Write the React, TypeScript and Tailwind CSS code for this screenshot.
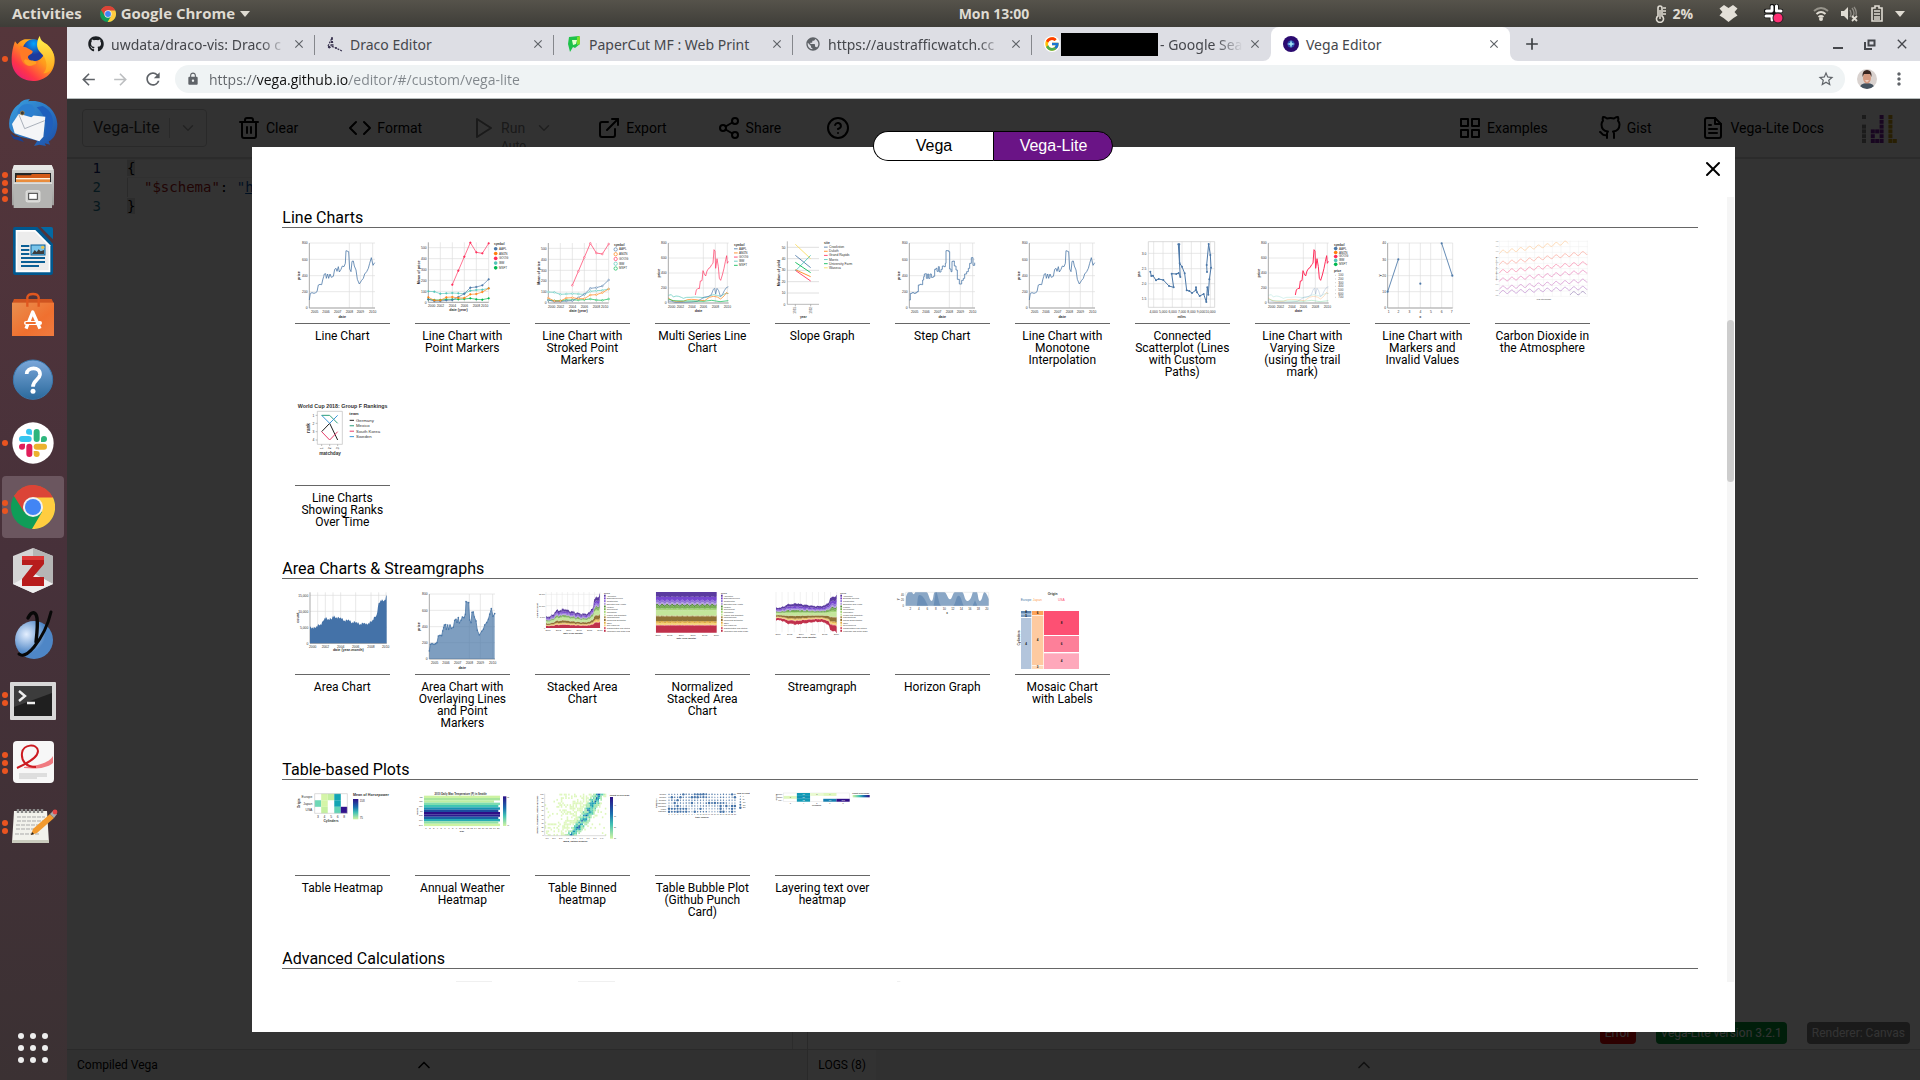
import React from 'react';
import type { ReactNode } from 'react';
import {
  FiTrash2, FiCode, FiPlay, FiExternalLink, FiShare2, FiHelpCircle, FiGrid, FiGithub,
  FiFileText, FiChevronDown, FiChevronUp, FiX,
} from 'react-icons/fi';
import { FaGithub } from 'react-icons/fa';
import {
  MdArrowBack, MdArrowForward, MdRefresh, MdLock, MdStarBorder, MdMoreVert, MdAdd, MdClose, MdPublic,
} from 'react-icons/md';
import { FcGoogle } from 'react-icons/fc';

const BLUE = '#4c78a8';
const ORANGE = '#ff7f0e';
const PINK = '#ff2e5b';
const TEAL = '#54c5b8';
const GREEN = '#00b84f';

type Pt = [number, number];
const line = (pts: Pt[]) => pts.map((p) => p.join(',')).join(' ');

/* ---------- thumbnail building blocks ---------- */

function Thumb({ x = 0, y = 0, children }: { x?: number; y?: number; children: ReactNode }) {
  return (
    <svg className="h-20 w-full" viewBox={`${x} ${y} 285 240`} preserveAspectRatio="xMinYMin meet" aria-hidden="true">
      {children}
    </svg>
  );
}

function T({ x, y, s = 10, c = '#333', a = 'middle', b = false, r = 0, children }: {
  x: number; y: number; s?: number; c?: string; a?: 'start' | 'middle' | 'end'; b?: boolean; r?: number; children: ReactNode;
}) {
  return (
    <text
      x={x} y={y} fontSize={s} fill={c} textAnchor={a} fontWeight={b ? 700 : 400}
      fontFamily='"Liberation Sans", sans-serif' transform={r ? `rotate(${r} ${x} ${y})` : undefined}
    >
      {children}
    </text>
  );
}

function Axes({ x0, x1, y0, y1, xs, ys, xl, yl, xlY, title, titleY, yTitle, yTitleX }: {
  x0: number; x1: number; y0: number; y1: number; xs: number[]; ys: number[]; xl: [number, string][]; yl: string[];
  xlY: number; title: string; titleY: number; yTitle: string; yTitleX: number;
}) {
  return (
    <g>
      <g stroke="#dcdcdc" strokeWidth="2">
        {xs.map((v) => <line key={v} x1={v} x2={v} y1={y0} y2={y1} />)}
        {ys.map((v) => <line key={v} x1={x0} x2={x1} y1={v} y2={v} />)}
      </g>
      <path d={`M${x0} ${y0}V${y1}H${x1}`} stroke="#999" strokeWidth="2.5" fill="none" />
      {ys.map((v, i) => <T key={v} x={x0 - 5} y={v + 4} a="end">{yl[i]}</T>)}
      {xl.map(([v, t]) => <T key={v} x={v} y={xlY}>{t}</T>)}
      <T x={(x0 + x1) / 2} y={titleY} b s={11}>{title}</T>
      <T x={yTitleX} y={(y0 + y1) / 2} b s={11} r={-90}>{yTitle}</T>
    </g>
  );
}

function Legend({ x, y, step, title, items, mark = 'line', s = 9 }: {
  x: number; y: number; step: number; title: string; items: [string, string][]; mark?: 'line' | 'dot' | 'ring' | 'box'; s?: number;
}) {
  return (
    <g>
      <T x={x} y={y + 3} a="start" b s={s}>{title}</T>
      {items.map(([label, color], i) => {
        const cy = y + step * (i + 1);
        return (
          <g key={label + i}>
            {mark === 'line' && <line x1={x} x2={x + 11} y1={cy} y2={cy} stroke={color} strokeWidth="2.5" />}
            {mark === 'dot' && <circle cx={x + 5} cy={cy} r="5.5" fill={color} />}
            {mark === 'ring' && <circle cx={x + 5} cy={cy} r="5" fill="none" stroke={color} strokeWidth="2" />}
            {mark === 'box' && <rect x={x} y={cy - 3} width="5" height="6" fill={color} />}
            <T x={x + (mark === 'box' ? 8 : 15)} y={cy + 3} a="start" s={s}>{label}</T>
          </g>
        );
      })}
    </g>
  );
}

const STOCKS: [string, string][] = [['AAPL', BLUE], ['AMZN', ORANGE], ['GOOG', PINK], ['IBM', TEAL], ['MSFT', GREEN]];

/* ---------- line charts ---------- */

const PRICE: Pt[] = [
  [118, 300], [121, 280], [126, 278], [132, 280], [137, 278], [141, 275], [145, 255], [150, 253], [155, 254], [158, 240],
  [161, 230], [163, 222], [167, 221], [169, 235], [173, 222], [176, 235], [180, 222], [184, 232], [190, 229], [194, 208],
  [198, 205], [201, 214], [205, 200], [208, 216], [213, 208], [217, 198], [222, 200], [226, 190], [228, 152], [236, 155],
  [239, 207], [243, 215], [246, 184], [250, 183], [253, 198], [258, 210], [262, 238], [268, 252], [275, 241], [280, 235],
  [284, 222], [290, 215], [295, 205], [299, 190], [304, 173], [309, 196], [314, 188],
];

function PriceChart({ kind = 'line' }: { kind?: 'line' | 'step' | 'area' }) {
  const pts: Pt[] = kind === 'step' ? PRICE.flatMap((p, i) => (i ? ([[p[0], PRICE[i - 1][1]], p] as Pt[]) : [p])) : PRICE;
  return (
    <Thumb x={75} y={120}>
      <Axes
        x0={118} x1={315} y0={129} y1={324} xs={[238, 271, 308]} ys={[129, 178, 227, 275, 324]}
        xl={[[134, '2005'], [168, '2006'], [203, '2007'], [238, '2008'], [271, '2009'], [308, '2010']]}
        yl={['800', '600', '400', '200', '0']} xlY={339} title="date" titleY={353} yTitle="price" yTitleX={90}
      />
      {kind === 'area' && <polygon points={`118,324 ${line(pts)} 314,324`} fill={BLUE} fillOpacity="0.72" />}
      <polyline points={line(pts)} fill="none" stroke={BLUE} strokeWidth="2.4" strokeLinejoin="round" />
      {kind === 'area' && PRICE.map(([x, y]) => <circle key={x} cx={x} cy={y} r="2.4" fill={BLUE} />)}
    </Thumb>
  );
}

const YEARLY: { c: string; p: Pt[] }[] = [
  { c: TEAL, p: [[475, 274], [493, 275], [511, 281], [529, 280], [547, 279], [565, 280], [583, 281], [601, 272], [619, 270], [637, 269], [656, 265]] },
  { c: GREEN, p: [[475, 298], [493, 300], [511, 300], [529, 298], [547, 298], [565, 298], [583, 297], [601, 295], [619, 298], [637, 299], [656, 295]] },
  { c: BLUE, p: [[475, 298], [493, 303], [511, 303], [529, 301], [547, 300], [565, 291], [583, 281], [601, 263], [619, 261], [637, 256], [656, 238]] },
  { c: ORANGE, p: [[475, 292], [493, 301], [511, 301], [529, 292], [547, 291], [565, 294], [583, 294], [601, 283], [619, 282], [637, 276], [656, 265]] },
  { c: PINK, p: [[547, 254], [565, 212], [583, 170], [601, 128], [619, 157], [637, 160], [656, 130]] },
];

function YearlyChart({ stroked = false }: { stroked?: boolean }) {
  return (
    <Thumb x={435} y={stroked ? 118 : 120}>
      <Axes
        x0={475} x1={656} y0={127} y1={307} xs={[511, 547, 583, 619, 656]} ys={[143, 176, 209, 241, 274, 307]}
        xl={[[485, '2000'], [511, '2002'], [547, '2004'], [583, '2006'], [619, '2008'], [644, '2010']]}
        yl={['500', '400', '300', '200', '100', '0']} xlY={321} title="date (year)" titleY={334} yTitle="Mean of price" yTitleX={449}
      />
      {YEARLY.map(({ c, p }) => (
        <g key={c}>
          <polyline points={line(p)} fill="none" stroke={c} strokeWidth="2" />
          {p.map(([x, y]) => (
            <circle key={x} cx={x} cy={y} r="2.5" fill={stroked ? '#fff' : c} stroke={c} strokeWidth="1.5" />
          ))}
        </g>
      ))}
      <Legend x={672} y={132} step={14.3} title="symbol" items={STOCKS} mark={stroked ? 'ring' : 'dot'} />
    </Thumb>
  );
}

const MULTI: { c: string; p: Pt[] }[] = [
  { c: TEAL, p: [[1195, 286], [1204, 284], [1210, 291], [1218, 288], [1226, 289], [1234, 292], [1240, 295], [1250, 292], [1262, 292], [1275, 291], [1290, 292], [1305, 293], [1318, 289], [1330, 284], [1342, 286], [1352, 290], [1362, 282], [1375, 280]] },
  { c: ORANGE, p: [[1195, 294], [1205, 301], [1220, 305], [1240, 304], [1252, 299], [1264, 298], [1278, 299], [1290, 301], [1304, 302], [1318, 292], [1330, 289], [1342, 291], [1352, 297], [1362, 288], [1370, 277], [1375, 282]] },
  { c: BLUE, p: [[1195, 303], [1205, 304], [1215, 307], [1240, 307], [1265, 306], [1282, 304], [1292, 298], [1304, 291], [1314, 290], [1324, 284], [1330, 268], [1334, 265], [1337, 282], [1341, 265], [1346, 272], [1351, 289], [1357, 284], [1363, 272], [1369, 263], [1375, 260]] },
  { c: GREEN, p: [[1195, 297], [1210, 302], [1240, 303], [1270, 303], [1300, 304], [1325, 301], [1350, 305], [1375, 302]] },
  { c: PINK, p: [[1276, 285], [1279, 270], [1284, 265], [1288, 266], [1291, 243], [1296, 242], [1299, 212], [1303, 222], [1307, 228], [1311, 213], [1316, 205], [1320, 203], [1325, 194], [1329, 190], [1332, 149], [1335, 153], [1337, 205], [1341, 176], [1345, 200], [1348, 235], [1352, 241], [1357, 225], [1362, 205], [1366, 185], [1370, 167], [1372, 190], [1375, 184]] },
];

function MultiChart({ trail = false }: { trail?: boolean }) {
  return (
    <Thumb x={1155} y={120}>
      <Axes
        x0={1195} x1={1376} y0={129} y1={309} xs={[1300, 1336, 1372]} ys={[129, 174, 219, 264, 309]}
        xl={[[1205, '2000'], [1231, '2002'], [1266, '2004'], [1300, '2006'], [1336, '2008'], [1372, '2010']]}
        yl={['800', '600', '400', '200', '0']} xlY={323} title="date" titleY={336} yTitle="price" yTitleX={1170}
      />
      {MULTI.map(({ c, p }) => (
        <polyline
          key={c} points={line(p)} fill="none" stroke={c} strokeLinejoin="round"
          strokeWidth={trail ? (c === PINK ? 3 : 1.2) : 2} strokeOpacity={trail && c !== PINK ? 0.6 : 1}
        />
      ))}
      <Legend x={1392} y={134} step={trail ? 11.8 : 12.4} title="symbol" items={STOCKS} mark={trail ? 'dot' : 'line'} s={9} />
      {trail && (
        <g>
          <T x={1392} y={215} a="start" b s={9}>price</T>
          {['100', '200', '300', '400', '500', '600', '700'].map((t, i) => (
            <g key={t}>
              <line x1={1395} x2={1398} y1={226 + i * 11} y2={226 + i * 11} stroke="#777" />
              <T x={1405} y={229 + i * 11} a="start" s={9}>{t}</T>
            </g>
          ))}
        </g>
      )}
    </Thumb>
  );
}

function SlopeGraph() {
  const rows: [string, string, number, number][] = [
    ['Crookston', BLUE, 166, 203], ['Duluth', ORANGE, 209, 230], ['Grand Rapids', PINK, 211, 243],
    ['Morris', TEAL, 213, 166], ['University Farm', GREEN, 187, 218], ['Waseca', '#fbdc5c', 133, 176],
  ];
  return (
    <Thumb x={45} y={120}>
      <g stroke="#d0d0d0" strokeWidth="2">
        {[142, 176, 211, 245, 279].map((y) => <line key={y} x1="82" x2="177" y1={y} y2={y} />)}
      </g>
      <path d="M82 124V313H177M106 313v6M152 313v6" stroke="#999" strokeWidth="2" fill="none" />
      {['50', '40', '30', '20', '10', '0'].map((t, i) => <T key={t} x={76} y={146 + i * 34.2} a="end">{t}</T>)}
      {rows.map(([n, c, a, b]) => <line key={n} x1="106" x2="152" y1={a} y2={b} stroke={c} strokeWidth="2.6" />)}
      <T x={109} y={331} r={-90} s={9}>1931</T>
      <T x={155} y={331} r={-90} s={9}>1932</T>
      <T x={130} y={353} b>year</T>
      <T x={59} y={219} b s={11} r={-90}>Median of yield</T>
      <Legend x={192} y={129} step={12.4} title="site" items={rows.map((r) => [r[0], r[1]] as [string, string])} s={10} />
    </Thumb>
  );
}

const DRIVE: Pt[] = [
  [1171, 215], [1174, 228], [1179, 227], [1188, 241], [1196, 237], [1210, 240], [1227, 258], [1241, 262], [1235, 221],
  [1249, 222], [1256, 219], [1261, 231], [1255, 133], [1258, 133], [1259, 190], [1266, 200], [1274, 220], [1280, 271],
  [1288, 273], [1296, 279], [1307, 271], [1308, 262], [1311, 277], [1319, 288], [1331, 282], [1339, 306], [1342, 262],
  [1345, 284], [1348, 238], [1353, 203], [1351, 165], [1346, 132], [1340, 195], [1341, 216],
];

function ConnectedScatter() {
  return (
    <Thumb x={1125} y={120}>
      <g stroke="#dcdcdc" strokeWidth="2">
        {[1181, 1209, 1237, 1266, 1294, 1322, 1351].map((x) => <line key={x} x1={x} x2={x} y1="125" y2="322" />)}
        {[160, 206, 251, 297].map((y) => <line key={y} x1="1165" x2="1364" y1={y} y2={y} />)}
      </g>
      <path d="M1165 125V322H1364V125Z" stroke="#c8c8c8" strokeWidth="2" fill="none" />
      {['3.0', '2.5', '2.0', '1.5'].map((t, i) => <T key={t} x={1159} y={164 + i * 45.6} a="end">{t}</T>)}
      {['4,000', '5,000', '6,000', '7,000', '8,000', '9,000', '10,000'].map((t, i) => <T key={t} x={1181 + i * 28.4} y={339} s={10}>{t}</T>)}
      <T x={1265} y={353} b>miles</T>
      <T x={1140} y={223} b r={-90}>gas</T>
      <polyline points={line(DRIVE)} fill="none" stroke={BLUE} strokeWidth="3" strokeLinejoin="round" />
      {DRIVE.map(([x, y]) => <circle key={`${x}-${y}`} cx={x} cy={y} r="3" fill={BLUE} />)}
    </Thumb>
  );
}

function InvalidChart() {
  const dots: Pt[] = [[443, 275], [475, 178], [541, 251], [605, 130], [637, 227]];
  return (
    <Thumb x={405} y={120}>
      <Axes
        x0={443} x1={638} y0={129} y1={324} xs={[475, 508, 541, 572, 605, 638]} ys={[129, 178, 227, 275, 324]}
        xl={[[446, '1'], [475, '2'], [508, '3'], [541, '4'], [573, '5'], [605, '6'], [635, '7']]}
        yl={['40', '30', '20', '10', '0']} xlY={339} title="x" titleY={353} yTitle="y" yTitleX={422}
      />
      <path d="M443 275L475 178M605 130L637 227" stroke={BLUE} strokeWidth="2.6" />
      {dots.map(([x, y]) => <circle key={x} cx={x} cy={y} r="3.2" fill={BLUE} />)}
    </Thumb>
  );
}

function CarbonDioxide() {
  const decades: [number, number, number, number, string][] = [
    [778, 985, 157, 127, '#fdc894'], [778, 1044, 190, 158, '#fba093'], [778, 1044, 215, 189, '#f77fa4'],
    [778, 1044, 240, 214, '#e67bb8'], [778, 1044, 264, 241, '#cf83c8'], [778, 1044, 277, 263, '#bb84cc'], [990, 1040, 280, 279, '#9c86b8'],
  ];
  return (
    <Thumb x={765} y={120}>
      <g stroke="#eee" strokeWidth="1.5">
        {[124, 140, 157, 173, 190, 206, 223, 239, 256, 273, 289].map((y) => <line key={y} x1="778" x2="1044" y1={y} y2={y} />)}
        {[778, 805, 832, 858, 884, 911, 937, 963, 990, 1016, 1042].map((x) => <line key={x} x1={x} x2={x} y1="122" y2="289" />)}
      </g>
      {decades.map(([a, b, y0, y1, c]) => {
        const pts: Pt[] = [];
        for (let x = a; x <= b; x += 3) {
          pts.push([x, Math.round((y0 + ((y1 - y0) * (x - a)) / (b - a) - 5 * Math.sin(((x - 782) / 26.6) * 2 * Math.PI)) * 10) / 10]);
        }
        return <polyline key={y0} points={line(pts)} fill="none" stroke={c} strokeWidth="2" />;
      })}
      {[126, 142, 157, 173, 190, 206, 223, 239, 256, 273, 289].map((y, i) => <T key={y} x={775} y={y} a="end" s={5} c="#888">{420 - i * 10}</T>)}
      <T x={771} y={206} r={-90} s={6}>CO2 concentration in ppm</T>
      <T x={911} y={299} s={6}>Year into decade</T>
    </Thumb>
  );
}

function RankChart() {
  const teams: [string, string, Pt[]][] = [
    ['Germany', '#222', [[155, 695], [179, 670], [203, 720]]], ['Mexico', '#2a9d7a', [[155, 646], [179, 646], [203, 670]]],
    ['South Korea', '#e83e6b', [[155, 695], [179, 720], [203, 695]]], ['Sweden', '#3b96d8', [[155, 646], [179, 670], [203, 646]]],
  ];
  return (
    <Thumb x={75} y={606}>
      <T x={218} y={624} b s={16}>World Cup 2018: Group F Rankings</T>
      <path d="M142 634H217V733H142Z" stroke="#bbb" strokeWidth="2" fill="none" />
      <path d="M137 646h5M137 670h5M137 695h5M137 720h5M155 733v5M179 733v5M203 733v5" stroke="#999" strokeWidth="2" />
      {['1', '2', '3', '4'].map((t, i) => <T key={t} x={130} y={650 + i * 24.8}>{t}</T>)}
      {['1', '2', '3'].map((t, i) => <T key={t} x={158 + i * 24.5} y={745} r={-90}>{t}</T>)}
      {teams.map(([n, c, p]) => <polyline key={n} points={line(p)} fill="none" stroke={c} strokeWidth="3" />)}
      <T x={180} y={765} b s={14}>matchday</T>
      <T x={120} y={684} b s={14} r={-90}>rank</T>
      <T x={238} y={644} b s={12} a="start">team</T>
      {teams.map(([n, c], i) => (
        <g key={n}>
          <line x1="239" x2="252" y1={661 + i * 16.3} y2={661 + i * 16.3} stroke={c} strokeWidth="3" />
          <T x={258} y={665 + i * 16.3} a="start" s={13}>{n}</T>
        </g>
      ))}
    </Thumb>
  );
}

/* ---------- area charts ---------- */

const TOTAL: Pt[] = [
  [0, 48], [13, 46], [25, 55], [35, 58], [40, 70], [46, 77], [55, 72], [65, 74], [69, 82], [80, 77], [92, 77], [105, 67], [115, 72],
  [125, 62], [137, 65], [150, 57], [162, 62], [170, 57], [180, 63], [188, 70], [195, 80], [200, 85], [206, 120], [213, 130],
  [220, 128], [225, 130], [230, 144],
];

function totalAt(x: number): number {
  const i = Math.max(1, TOTAL.findIndex((p) => p[0] >= x));
  const [a, b] = [TOTAL[i - 1], TOTAL[i]];
  return a[1] + ((b[1] - a[1]) * (x - a[0])) / (b[0] - a[0]) + [3, 1, -2, -2, 1, -3][Math.round(x / 2) % 6];
}
const XS = Array.from({ length: 116 }, (_, i) => i * 2);

const LAYERS: [string, number][] = [
  ['#c0304b', 0.17], ['#d9576a', 0.02], ['#f3d37a', 0.05], ['#e0aa3e', 0.04], ['#8f7135', 0.12], ['#a98d4d', 0.02],
  ['#c3e69b', 0.13], ['#a5d678', 0.04], ['#79b152', 0.06], ['#558b3c', 0.04], ['#b39ddb', 0.04], ['#9175d8', 0.06],
  ['#7647cf', 0.09], ['#5a3a9f', 0.12],
];
const INDUSTRIES = [
  'Agriculture', 'Business services', 'Construction', 'Education and Health', 'Finance', 'Government', 'Information',
  'Leisure and hospitality', 'Manufacturing', 'Mining and Extraction', 'Other', 'Self-employed', 'Transportation and Utilities',
  'Wholesale and Retail Trade',
];

function AreaChart() {
  return (
    <Thumb x={75} y={153}>
      <Axes
        x0={120} x1={350} y0={157} y1={310} xs={[143, 166, 189, 212, 257, 303, 326, 348]} ys={[166, 214, 262, 310]}
        xl={[[128, '2000'], [166, '2002'], [212, '2004'], [257, '2006'], [303, '2008'], [347, '2010']]}
        yl={['15,000', '10,000', '5,000', '0']} xlY={323} title="date (year-month)" titleY={334} yTitle="count" yTitleX={88}
      />
      <polygon points={`120,310 ${line(XS.map((x) => [120 + x, 310 - totalAt(x)] as Pt))} 350,310`} fill="#4472a8" />
    </Thumb>
  );
}

function StackChart({ kind }: { kind: 'stack' | 'normal' | 'stream' }) {
  const cfg = {
    stack: { x: 828, w: 162, top: 156, base: 264, lx: 1002 },
    normal: { x: 828, w: 182, top: 156, base: 278, lx: 1023 },
    stream: { x: 800, w: 182, top: 156, base: 277, lx: 993 },
  }[kind];
  const ox = kind === 'stack' ? 795 : kind === 'normal' ? 825 : 797;
  const edge = (x: number, f: number): number => {
    const inner = f > 0.02 && f < 0.98;
    const season = f > 0.64 && f < 0.82 ? 0.02 : 0.005;
    const wob = inner ? Math.sin((x / 19) * 2 * Math.PI) * season + ((x / 2) % 5 < 1 ? 0.006 : 0) : 0;
    if (kind === 'normal') return cfg.base - (f + wob) * 122;
    if (kind === 'stack') return cfg.base - (f + wob) * totalAt(x) * 0.72;
    return 222 + (0.5 - f - wob) * totalAt(x) * 0.8;
  };
  const px = (x: number) => cfg.x + (x * cfg.w) / 230;
  let acc = 0;
  const bands = LAYERS.map(([c, f]) => {
    const lo = acc;
    acc += f;
    const hi = Math.min(1, acc);
    const pts: Pt[] = [...XS.map((x) => [px(x), edge(x, hi)] as Pt), ...[...XS].reverse().map((x) => [px(x), edge(x, lo)] as Pt)];
    return <polygon key={c} fill={c} points={pts.map(([a, b]) => `${a.toFixed(1)},${b.toFixed(1)}`).join(' ')} />;
  });
  return (
    <Thumb x={ox} y={153}>
      <g stroke="#e2e2e2" strokeWidth="1.5">
        {[0, 0.1, 0.2, 0.3, 0.4, 0.5, 0.6, 0.7, 0.8, 0.9, 1].map((f) => (
          <line key={f} x1={cfg.x + cfg.w * f} x2={cfg.x + cfg.w * f} y1={cfg.top} y2={cfg.base} />
        ))}
        {kind === 'stack' && [163, 197, 231].map((y) => <line key={y} x1={cfg.x} x2={cfg.x + cfg.w} y1={y} y2={y} />)}
      </g>
      {bands}
      {kind === 'stack' && ['15,000', '10,000', '5,000', '0'].map((t, i) => <T key={t} x={825} y={166 + i * 34} a="end" s={6}>{t}</T>)}
      {kind === 'stack' && <T x={803} y={211} r={-90} b s={7}>sum of count</T>}
      {['2000', '2002', '2004', '2006', '2008', '2010'].map((t, i) => <T key={t} x={cfg.x + 6 + i * (cfg.w / 5.2)} y={cfg.base + 9} s={7}>{t}</T>)}
      <T x={cfg.x + cfg.w / 2} y={cfg.base + 18} b s={7}>date (year-month)</T>
      <Legend
        x={cfg.lx} y={159} step={8.1} title="series" mark="box" s={6}
        items={INDUSTRIES.map((n, i) => [n, LAYERS[LAYERS.length - 1 - i][0]] as [string, string])}
      />
    </Thumb>
  );
}

function HorizonGraph() {
  return (
    <Thumb x={405} y={153}>
      <path d="M437 157H686V197H437Z" stroke="#ddd" strokeWidth="1.5" fill="none" />
      <path
        fill="#4c78a8" fillOpacity="0.65"
        d="M437 197L438 170Q442 157 447 157H456Q461 168 466 157H499C506 157 508 183 515 183C521 183 519 157 525 157H553C560 157 563 178 570 178C577 178 578 157 585 157H606C613 157 613 183 622 183C632 183 636 166 638 157H651C655 166 654 183 660 183C667 183 668 157 674 157C680 159 684 172 686 177V197Z"
      />
      <path fill="#4c78a8" fillOpacity="0.5" d="M470 197C474 190 471 165 479 165C487 165 495 178 501 192L504 197ZM521 197L527 157H530L539 192L543 197ZM580 197C588 190 588 167 596 167C603 167 606 188 611 197ZM638 197L645 181L652 197Z" />
      {['40', '20', '0'].map((t, i) => <T key={t} x={432} y={168 + i * 16.3} a="end" s={8}>{t}</T>)}
      {[2, 4, 6, 8, 10, 12, 14, 16, 18, 20].map((t, i) => <T key={t} x={451 + i * 25.5} y={211} s={9}>{t}</T>)}
      <T x={418} y={178} b r={-90} s={9}>y</T>
      <T x={561} y={222} b s={9}>x</T>
    </Thumb>
  );
}

function MosaicChart() {
  const cells: [number, number, number, number, string, string][] = [
    [783, 213, 31, 8, '#5d85b1', '8'], [783, 223, 31, 8, '#7b9dc3', '5'], [783, 234, 31, 153, '#b3c5dc', '4'],
    [816, 213, 34, 12, '#fda45c', '6'], [816, 227, 34, 148, '#fecaa0', '4'], [816, 377, 34, 10, '#fed9b8', '3'],
    [852, 213, 105, 72, '#fd5073', '8'], [852, 288, 105, 48, '#fd7f99', '6'], [852, 340, 105, 47, '#fea8bb', '4'],
  ];
  return (
    <Thumb x={765} y={153}>
      <T x={878} y={166} b s={10}>Origin</T>
      <T x={798} y={184} c="#4c78a8" s={10}>Europe</T>
      <T x={832} y={184} c="#fda45c" s={10}>Japan</T>
      <T x={904} y={184} c="#fd5073" s={10}>USA</T>
      <T x={779} y={294} b r={-90} s={10}>Cylinders</T>
      {cells.map(([x, y, w, h, c, t]) => (
        <g key={`${x}-${y}`}>
          <rect x={x} y={y} width={w} height={h} fill={c} />
          <T x={x + w / 2} y={y + h / 2 + 3} s={9} b c="#111">{t}</T>
        </g>
      ))}
    </Thumb>
  );
}

/* ---------- table plots ---------- */

function HeatRamp({ id, across = false }: { id: string; across?: boolean }) {
  return (
    <linearGradient id={id} x1="0" y1="0" x2={across ? 1 : 0} y2={across ? 0 : 1}>
      <stop offset="0" stopColor={across ? '#d2f4a3' : '#2b0e86'} />
      <stop offset="0.4" stopColor={across ? '#3fc0b4' : '#1a6faf'} />
      <stop offset="0.65" stopColor={across ? '#1a6faf' : '#3fc0b4'} />
      <stop offset="1" stopColor={across ? '#2b0e86' : '#d2f4a3'} />
    </linearGradient>
  );
}

function TableHeatmap() {
  const cells: [number, number, string][] = [
    [1, 0, '#d5f5a8'], [2, 0, '#c5f0a0'], [3, 0, '#12a5b3'], [0, 1, '#6ed8b6'], [1, 1, '#d5f5a8'], [3, 1, '#12a5b3'],
    [1, 2, '#c5f0a0'], [3, 2, '#63d3b5'], [4, 2, '#30118c'],
  ];
  return (
    <Thumb y={126}>
      <defs><HeatRamp id="ramp-table" /></defs>
      {cells.map(([x, y, c]) => <rect key={`${x}${y}`} x={59 + x * 19.6} y={131 + y * 19.7} width="19.6" height="19.7" fill={c} />)}
      <path d="M59 131H157V190H59Z" stroke="#ccc" strokeWidth="2" fill="none" />
      {['Europe', 'Japan', 'USA'].map((t, i) => <T key={t} x={52} y={144 + i * 19.7} a="end">{t}</T>)}
      {['3', '4', '5', '6', '8'].map((t, i) => <T key={t} x={69 + i * 19.6} y={204}>{t}</T>)}
      <T x={108} y={215} b>Cylinders</T>
      <T x={15} y={160} b r={-90}>Origin</T>
      <T x={174} y={139} b s={11} a="start">Mean of Horsepower</T>
      <rect x="174" y="147" width="16" height="61" fill="url(#ramp-table)" />
      <T x={194} y={155} a="start" s={9}>158</T>
      <T x={194} y={207} a="start" s={9}>75</T>
    </Thumb>
  );
}

function WeatherHeatmap() {
  const rows = ['#cdf3a2', '#a9e59d', '#bdeea2', '#7edcb0', '#3fc5b4', '#1793b2', '#1c4c9f', '#2f0e86', '#2c1b8d', '#1b62a5', '#27abb4', '#8fe0a8', '#cdf3a2'];
  const ends = [255, 255, 237, 255, 250, 255, 250, 255, 255, 250, 255, 250, 255];
  return (
    <Thumb y={126}>
      <defs><HeatRamp id="ramp-weather" /></defs>
      <T x={137} y={134} b s={8}>2010 Daily Max Temperature (F) in Seattle</T>
      {rows.map((c, i) => <rect key={i} x="27" y={137 + i * 7} width={ends[i] - 27} height="7.2" fill={c} />)}
      {['Jan', 'Mar', 'May', 'Jul', 'Sep', 'Nov', 'Dec'].map((t, i) => <T key={t} x={23} y={143 + i * 14} a="end" s={6}>{t}</T>)}
      <T x={8} y={184} b r={-90} s={7}>Month</T>
      {Array.from({ length: 20 }, (_, i) => <T key={i} x={33 + i * 11.4} y={236} s={7}>{i + 1}</T>)}
      <T x={141} y={246} b s={7}>Day</T>
      <rect x="264" y="139" width="10" height="89" fill="url(#ramp-weather)" />
      <T x={276} y={144} a="start" s={6}>75</T>
      <T x={276} y={228} a="start" s={6}>40</T>
    </Thumb>
  );
}

function BinnedHeatmap() {
  const cells: ReactNode[] = [];
  const cols = 42;
  const rows = 24;
  for (let i = 0; i < cols; i += 1) {
    for (let j = 0; j < rows; j += 1) {
      const n = (((Math.sin(i * 12.9898 + j * 78.233) * 43758.5453) % 1) + 1) % 1;
      const t = 1 - j / rows;
      const ridge = 15 + Math.sqrt(t) * 12 + t * 9;
      const d = Math.abs(i - ridge);
      const strong = Math.max(0, 1 - d / 6) * (0.35 + n * 0.9);
      let limit = 0.72;
      if (i > ridge + 6) limit = 0.93;
      else if (i < 8 && j < 17) limit = 0.95;
      else if (i < ridge && d < 12) limit = 0.45;
      let c = '';
      if (strong > 0.95) c = '#1c5fa8';
      else if (strong > 0.72) c = '#1d9fb4';
      else if (strong > 0.48) c = '#5fd0b4';
      else if (strong > 0.26) c = '#a9e8ae';
      else if (n > limit) c = '#def7bd';
      if (c) cells.push(<rect key={`${i}-${j}`} x={29 + i * 4.4} y={131 + j * 5.25} width="4.6" height="5.5" fill={c} />);
    }
  }
  return (
    <Thumb y={126}>
      <defs><HeatRamp id="ramp-binned" /></defs>
      {cells}
      <path d="M29 131V257H213" stroke="#ccc" strokeWidth="2" fill="none" />
      {[100, 90, 80, 70, 60, 50, 40, 30, 20, 10, 0].map((t, i) => <T key={t} x={26} y={134 + i * 12.5} a="end" s={6}>{t}</T>)}
      {['1.0', '2.0', '3.0', '4.0', '5.0', '6.0', '7.0', '8.0', '9.0'].map((t, i) => <T key={t} x={36 + i * 20.5} y={266} s={7}>{t}</T>)}
      <T x={121} y={275} b s={7}>IMDB_Rating (binned)</T>
      <T x={9} y={194} b r={-90} s={7}>Rotten_Tomatoes_Rating (binned)</T>
      <T x={224} y={137} b a="start" s={7}>Count of Records</T>
      <rect x="225" y="141" width="9" height="125" fill="url(#ramp-binned)" />
      {['40', '30', '20', '10'].map((t, i) => <T key={t} x={237} y={168 + i * 33} a="start" s={6}>{t}</T>)}
    </Thumb>
  );
}

function PunchCard() {
  return (
    <Thumb y={126}>
      <g stroke="#e2e2e2" strokeWidth="1.2">
        {Array.from({ length: 24 }, (_, i) => <line key={i} x1={42 + i * 8.6} x2={42 + i * 8.6} y1="129" y2="189" />)}
      </g>
      {Array.from({ length: 24 * 7 }, (_, k) => {
        const i = k % 24;
        const j = Math.floor(k / 24);
        const n = (((Math.sin(k * 91.7 + 3) * 9301.31) % 1) + 1) % 1;
        const busy = (j < 2 && i > 8 && i < 14) || (j === 3 && i > 12 && i < 20) || (j > 4 && i < 7) || n > 0.88;
        return <circle key={k} cx={42 + i * 8.6} cy={133 + j * 8.7} r={busy ? 2.6 + n * 1.1 : 1.5 + n} fill="#4573a8" />;
      })}
      {['Sunday', 'Monday', 'Tuesday', 'Wednesday', 'Thursday', 'Friday', 'Saturday'].map((t, i) => <T key={t} x={34} y={135 + i * 8.7} a="end" s={6}>{t}</T>)}
      {Array.from({ length: 24 }, (_, i) => <T key={i} x={42 + i * 8.6} y={196} s={5}>{i}</T>)}
      <T x={141} y={204} b s={7}>time (hours)</T>
      <T x={6} y={160} b s={6} r={-90}>time (day)</T>
      <T x={246} y={132} b s={6} a="start">Sum of count</T>
      {[1.5, 2, 2.5, 3, 3.8].map((r, i) => (
        <g key={r}>
          <circle cx="256" cy={139 + i * 8.5} r={r} fill="#4573a8" />
          <T x={263} y={141 + i * 8.5} a="start" s={5}>{i * 50}</T>
        </g>
      ))}
    </Thumb>
  );
}

function TextHeatmap() {
  const cells: [number, number, string, string][] = [
    [0, 1, '#def7bd', '3'], [1, 0, '#1199b4', '63'], [1, 1, '#1191b2', '69'], [1, 2, '#1199b4', '72'], [2, 0, '#e9fad2', '3'],
    [3, 0, '#def7bd', '4'], [3, 2, '#157fb0', '73'], [4, 2, '#2f0e86', '108'],
  ];
  return (
    <Thumb y={126}>
      <defs><HeatRamp id="ramp-text" across /></defs>
      <rect x="26" y="129" width="198" height="26" fill="none" stroke="#e2e2e2" strokeWidth="1.5" />
      {cells.map(([x, y, c, t]) => (
        <g key={`${x}${y}`}>
          <rect x={26 + x * 39.6} y={129 + y * 8.7} width="39.6" height="8.7" fill={c} />
          <T x={46 + x * 39.6} y={135 + y * 8.7} s={6} c={y === 2 || x === 1 ? '#fff' : '#333'}>{t}</T>
        </g>
      ))}
      {['Europe', 'Japan', 'USA'].map((t, i) => <T key={t} x={22} y={135 + i * 8.7} a="end" s={6}>{t}</T>)}
      {['3', '4', '5', '6', '8'].map((t, i) => <T key={t} x={46 + i * 39.6} y={161} s={6}>{t}</T>)}
      <T x={125} y={168} s={6} b>Cylinders</T>
      <T x={6} y={142} s={6} b r={-90}>Origin</T>
      <T x={232} y={132} a="start" b s={6}>Count of Records</T>
      <rect x="233" y="135" width="51" height="7" fill="url(#ramp-text)" />
    </Thumb>
  );
}

function PartialThumb({ a, b }: { a: number; b: number }) {
  return <Thumb><rect x={a} y="0" width={b - a} height="3" fill="#f0f0f0" /></Thumb>;
}

/* ---------- gallery data ---------- */

type Example = { name: string; art: ReactNode };
const SECTIONS: { title: string; items: Example[] }[] = [
  {
    title: 'Line Charts',
    items: [
      { name: 'Line Chart', art: <PriceChart /> },
      { name: 'Line Chart with Point Markers', art: <YearlyChart /> },
      { name: 'Line Chart with Stroked Point Markers', art: <YearlyChart stroked /> },
      { name: 'Multi Series Line Chart', art: <MultiChart /> },
      { name: 'Slope Graph', art: <SlopeGraph /> },
      { name: 'Step Chart', art: <PriceChart kind="step" /> },
      { name: 'Line Chart with Monotone Interpolation', art: <PriceChart /> },
      { name: 'Connected Scatterplot (Lines with Custom Paths)', art: <ConnectedScatter /> },
      { name: 'Line Chart with Varying Size (using the trail mark)', art: <MultiChart trail /> },
      { name: 'Line Chart with Markers and Invalid Values', art: <InvalidChart /> },
      { name: 'Carbon Dioxide in the Atmosphere', art: <CarbonDioxide /> },
      { name: 'Line Charts Showing Ranks Over Time', art: <RankChart /> },
    ],
  },
  {
    title: 'Area Charts & Streamgraphs',
    items: [
      { name: 'Area Chart', art: <AreaChart /> },
      { name: 'Area Chart with Overlaying Lines and Point Markers', art: <PriceChart kind="area" /> },
      { name: 'Stacked Area Chart', art: <StackChart kind="stack" /> },
      { name: 'Normalized Stacked Area Chart', art: <StackChart kind="normal" /> },
      { name: 'Streamgraph', art: <StackChart kind="stream" /> },
      { name: 'Horizon Graph', art: <HorizonGraph /> },
      { name: 'Mosaic Chart with Labels', art: <MosaicChart /> },
    ],
  },
  {
    title: 'Table-based Plots',
    items: [
      { name: 'Table Heatmap', art: <TableHeatmap /> },
      { name: 'Annual Weather Heatmap', art: <WeatherHeatmap /> },
      { name: 'Table Binned heatmap', art: <BinnedHeatmap /> },
      { name: 'Table Bubble Plot (Github Punch Card)', art: <PunchCard /> },
      { name: 'Layering text over heatmap', art: <TextHeatmap /> },
    ],
  },
  {
    title: 'Advanced Calculations',
    items: [
      { name: '', art: null },
      { name: '', art: <PartialThumb a={123} b={231} /> },
      { name: '', art: <PartialThumb a={129} b={240} /> },
      { name: '', art: null },
      { name: '', art: null },
      { name: '', art: <PartialThumb a={6} b={16} /> },
    ],
  },
];

function Gallery() {
  return (
    <div className="min-w-0 flex-1 overflow-hidden pt-[11px] pr-[29px] pl-[30px]">
      {SECTIONS.map((s) => (
        <section key={s.title} className="mb-[19px]">
          <h2 className="border-b border-[#666] text-base leading-[19px]">{s.title}</h2>
          <div className="flex flex-wrap">
            {s.items.map((it, i) => (
              <button key={i} type="button" className="flex w-[120px] flex-col p-3 text-center text-xs leading-3">
                <span className="ml-px block h-[84px] self-stretch overflow-hidden border-b border-[#666]">{it.art}</span>
                <span className="block w-full pt-[6px]">{it.name}</span>
              </button>
            ))}
          </div>
        </section>
      ))}
    </div>
  );
}

/* ---------- dock ---------- */

function ChromeLogo({ className }: { className: string }) {
  return (
    <svg className={className} viewBox="0 0 44 44" aria-hidden="true">
      <circle cx="22" cy="22" r="22" fill="#0f9d58" />
      <path d="M22 22L3 11A22 22 0 0 1 42.2 13H22Z" fill="#db4437" />
      <path d="M3 11A22 22 0 0 1 42 13L22 12.5L13 27Z" fill="#db4437" />
      <path d="M22 12.5H42A22 22 0 0 1 21 44L31 27Z" fill="#ffcd40" />
      <circle cx="22" cy="22" r="10" fill="#f1f1f1" />
      <circle cx="22" cy="22" r="8" fill="#4285f4" />
    </svg>
  );
}

function Icon({ slot, children }: { slot?: number; children: ReactNode }) {
  const box = slot === undefined ? '0 0 67 64' : `0 ${21 + slot * 192} 201 192`;
  return <svg className="h-16 w-[67px]" viewBox={box} aria-hidden="true">{children}</svg>;
}

const DOCK: { name: string; dots: number; active?: boolean; art: ReactNode }[] = [
  {
    name: 'Firefox', dots: 1,
    art: (
      <Icon slot={0}>
        <defs>
          <linearGradient id="ff-a" x1="1" y1="0" x2="0.1" y2="1"><stop offset="0" stopColor="#ffe226" /><stop offset="0.45" stopColor="#ff9a1c" /><stop offset="0.75" stopColor="#ff3647" /><stop offset="1" stopColor="#e31587" /></linearGradient>
          <radialGradient id="ff-b" cx="0.5" cy="0.2"><stop offset="0" stopColor="#00a5ff" /><stop offset="1" stopColor="#1e3a9c" /></radialGradient>
          <linearGradient id="ff-c" x1="0" y1="0" x2="0" y2="1"><stop offset="0" stopColor="#fff44f" /><stop offset="1" stopColor="#ffa31c" /></linearGradient>
        </defs>
        <path d="M99 183C62 183 35 156 35 121C35 95 40 78 45 64L52 73C56 67 64 61 70 59C76 57 128 55 148 80C162 96 165 112 164 122C163 158 134 183 99 183Z" fill="url(#ff-a)" />
        <circle cx="101" cy="91" r="33" fill="url(#ff-b)" />
        <path d="M60 78L78 82L98 93C99 104 82 104 84 113C88 123 104 128 116 123C110 138 90 142 76 134C66 129 58 108 60 78Z" fill="#ff7a25" />
        <path d="M76 118C84 123 96 120 105 124C112 128 110 134 100 134C90 142 74 134 72 122Z" fill="#ff9f23" />
        <path d="M120 47C119 58 129 66 141 74C158 88 166 106 160 134C154 154 140 160 130 160C148 142 138 112 122 98C106 84 110 60 120 47Z" fill="url(#ff-c)" />
      </Icon>
    ),
  },
  {
    name: 'Thunderbird', dots: 0,
    art: (
      <Icon slot={1}>
        <defs><linearGradient id="tb-a" x1="0" y1="0" x2="1" y2="1"><stop offset="0" stopColor="#3aa1e0" /><stop offset="1" stopColor="#1c4ea8" /></linearGradient></defs>
        <path d="M28 322C24 290 40 262 58 252C64 242 76 238 90 238L84 244C130 236 170 268 172 312C172 340 160 358 146 364L150 374L134 370L138 378L118 374L102 378L112 362L60 350C40 342 30 332 28 322Z" fill="url(#tb-a)" />
        <path d="M128 258C156 272 166 300 154 330L134 358C142 320 140 290 110 262Z" fill="#1f5fbd" />
        <path d="M36 312L56 282L136 290L130 350L118 364L44 340Z" fill="#f4f5f7" />
        <path d="M56 282L74 326L134 302" stroke="#aab1bb" strokeWidth="3" fill="none" />
        <path d="M52 280C54 258 74 248 96 254C108 268 106 284 94 292Z" fill="#2b7fd0" />
        <circle cx="67" cy="279" r="6" fill="#3b3b3b" stroke="#b98b3c" strokeWidth="2" />
        <path d="M30 340L44 350L60 352L72 366L40 356Z" fill="#1a3f8f" />
      </Icon>
    ),
  },
  {
    name: 'Files', dots: 4,
    art: (
      <Icon slot={2}>
        <defs><linearGradient id="fi-a" x1="0" y1="0" x2="0" y2="1"><stop offset="0" stopColor="#d6d6d4" /><stop offset="1" stopColor="#9d9d9b" /></linearGradient></defs>
        <path d="M42 435H155L162 452V556H36V452Z" fill="url(#fi-a)" />
        <path d="M42 435H155L161 450H37Z" fill="#e8e8e6" />
        <rect x="45" y="459" width="108" height="32" fill="#252525" />
        <path d="M50 466H92L96 462H150V490H48Z" fill="#d35a17" />
        <rect x="48" y="474" width="102" height="5" fill="#fff3df" />
        <rect x="48" y="479" width="102" height="12" fill="#e98c3c" />
        <path d="M41 487H156V564H41Z" fill="#b4b4b2" />
        <path d="M41 487H156V492H41Z" fill="#dededc" />
        <rect x="78" y="512" width="42" height="34" rx="5" fill="#d2d2d0" stroke="#f0f0ee" strokeWidth="2" />
        <rect x="86" y="520" width="26" height="18" fill="#fff" stroke="#444" strokeWidth="3" />
      </Icon>
    ),
  },
  {
    name: 'LibreOffice Writer', dots: 0,
    art: (
      <Icon slot={3}>
        <path d="M45 621H112L159 672V758Q159 765 152 765H46Q39 765 39 758V628Q39 621 45 621Z" fill="#00588f" />
        <path d="M122 621H154Q159 621 159 627V658Z" fill="#0369a3" />
        <path d="M47 630H106L151 676V757H47Z" fill="#fff" />
        <path d="M52 635H104L146 678V751H52Z" fill="#ececec" />
        <path d="M63 678H88M63 690H88M63 702H88M63 714H135M63 726H135M63 738H117" stroke="#0a5f95" strokeWidth="6" />
        <rect x="93" y="675" width="42" height="30" fill="#78c4ea" stroke="#0a5f95" strokeWidth="3" />
        <path d="M96 702L104 690L110 696L116 688L122 694L132 690V702Z" fill="#3d3d3d" />
        <circle cx="128" cy="682" r="5" fill="#eac54f" />
      </Icon>
    ),
  },
  {
    name: 'Ubuntu Software', dots: 0,
    art: (
      <Icon slot={4}>
        <defs><linearGradient id="us-a" x1="0" y1="0" x2="1" y2="1"><stop offset="0" stopColor="#e98f4f" /><stop offset="0.6" stopColor="#f0702f" /><stop offset="1" stopColor="#ef7b40" /></linearGradient></defs>
        <path d="M42 837H155L162 852H36Z" fill="#cf5420" />
        <rect x="36" y="848" width="126" height="100" fill="url(#us-a)" />
        <path d="M82 860V832Q84 822 99 822Q114 822 116 832V860" fill="none" stroke="#e0571f" strokeWidth="7" />
        <path d="M78 926L98 876L120 926" fill="none" stroke="#fff" strokeWidth="10" strokeLinejoin="round" />
        <rect x="72" y="903" width="54" height="12" rx="6" fill="#fff" />
        <rect x="77" y="906" width="30" height="6" fill="#f0702f" />
      </Icon>
    ),
  },
  {
    name: 'Help', dots: 0,
    art: (
      <Icon slot={5}>
        <defs><linearGradient id="he-a" x1="0" y1="0" x2="0" y2="1"><stop offset="0" stopColor="#7ba7da" /><stop offset="1" stopColor="#2b6a9c" /></linearGradient></defs>
        <circle cx="99" cy="1079" r="59" fill="url(#he-a)" stroke="#3a78ad" strokeWidth="3" />
        <path d="M80 1062C80 1040 122 1038 120 1064C118 1080 99 1080 99 1100" fill="none" stroke="#fff" strokeWidth="11" />
        <circle cx="99" cy="1114" r="7.5" fill="#fff" />
      </Icon>
    ),
  },
  {
    name: 'Slack', dots: 1,
    art: (
      <Icon slot={6}>
        <circle cx="99" cy="1269" r="62" fill="#fff" />
        <g fill="#36c5f0"><rect x="57" y="1248" width="38" height="18" rx="9" /><path d="M96 1244V1235A9 9 0 1 0 87 1244Z" /></g>
        <g fill="#2eb67d"><rect x="101" y="1227" width="18" height="39" rx="9" /><path d="M123 1266H132A9 9 0 1 0 123 1257Z" /></g>
        <g fill="#ecb22e"><rect x="101" y="1271" width="40" height="18" rx="9" /><path d="M101 1293V1302A9 9 0 1 0 110 1293Z" /></g>
        <g fill="#e01e5a"><rect x="79" y="1271" width="18" height="40" rx="9" /><path d="M75 1271H66A9 9 0 1 0 75 1280Z" /></g>
      </Icon>
    ),
  },
  { name: 'Google Chrome', dots: 2, active: true, art: <ChromeLogo className="mr-px h-11 w-11" /> },
  {
    name: 'Zotero', dots: 0,
    art: (
      <Icon>
        <path d="M33 9L53 17V45L33 54L13 45V17Z" fill="#d4d4d4" />
        <path d="M33 9L53 17V45L33 34Z" fill="#b5b5b5" />
        <path d="M13 45L33 34L53 45L33 54Z" fill="#eee" />
        <path d="M22 17H44V25L33 38H44V47H22V40L33 26H22Z" fill="#b71c1c" />
        <path d="M22 17H44V21H22Z" fill="#dd3535" />
      </Icon>
    ),
  },
  {
    name: 'yEd', dots: 0,
    art: (
      <Icon>
        <defs><radialGradient id="ye-a" cx="0.3" cy="0.35"><stop offset="0" stopColor="#e4efff" /><stop offset="1" stopColor="#4e86c6" /></radialGradient></defs>
        <ellipse cx="34" cy="37" rx="19" ry="19" fill="url(#ye-a)" />
        <path d="M28 15C32 7 36 9 37 15C38 22 37 30 36 39" fill="none" stroke="#080808" strokeWidth="3.4" strokeLinecap="round" />
        <path d="M51 9C48 22 42 34 34 44C29 50 23 54 19 51" fill="none" stroke="#080808" strokeWidth="3" strokeLinecap="round" />
      </Icon>
    ),
  },
  {
    name: 'Terminal', dots: 2,
    art: (
      <Icon>
        <rect x="10" y="15" width="46" height="38" rx="1" fill="#d8d8d8" />
        <rect x="14" y="19" width="38" height="30" fill="#1f1f1f" />
        <path d="M14 19H52V26L14 40Z" fill="#3c3c3c" />
        <path d="M19 24L25 29L19 34M27 36H35" fill="none" stroke="#eee" strokeWidth="2.4" />
      </Icon>
    ),
  },
  {
    name: 'Document Viewer', dots: 3,
    art: (
      <Icon>
        <rect x="13" y="10" width="41" height="42" rx="4" fill="#f7f7f7" />
        <path d="M24 36C44 34 50 30 53 25V32C46 38 34 38 24 37Z" fill="#f07a80" />
        <path d="M17 37C30 31 38 26 38 20C37 12 23 13 22 22C21 30 26 36 36 36" fill="none" stroke="#cc1a20" strokeWidth="2" />
        <path d="M19 43H47M19 45H47M19 47H37" stroke="#c4c4c4" strokeWidth="1" />
      </Icon>
    ),
  },
  {
    name: 'Notes', dots: 2,
    art: (
      <Icon>
        <path d="M14 16H47L49 48H12Z" fill="#f2f2ec" />
        <path d="M12 45H49V48H12Z" fill="#c9cbbd" />
        <path d="M17 22H45M17 26H43M16 30H40M16 34H34M15 39H40" stroke="#a9a9a9" strokeWidth="1" strokeDasharray="4 1" />
        <path d="M18 14V18M22 14V18M26 14V18M30 14V18M34 14V18M38 14V18M42 14V18" stroke="#888" strokeWidth="2.4" />
        <path d="M31 40L33 34L50 19L54 23L37 38Z" fill="#f29a2e" />
        <path d="M50 19L53 16L57 19L54 23Z" fill="#a8a8a8" />
        <circle cx="55" cy="17" r="2.4" fill="#e64545" />
        <path d="M31 40L32 37L34 39Z" fill="#222" />
      </Icon>
    ),
  },
];

function Dock() {
  return (
    <nav aria-label="Dock" className="flex w-[67px] shrink-0 flex-col bg-linear-to-b from-[#55363b] via-[#47313a] to-[#3b3133]">
      {DOCK.map((d) => (
        <button key={d.name} type="button" aria-label={d.name} className="relative flex h-16 w-full items-center justify-center">
          {d.active && <span className="absolute inset-y-px left-[2px] w-[62px] rounded bg-[#6b565f]" />}
          <span className="relative flex">{d.art}</span>
          <span className="absolute inset-y-0 left-[2px] flex flex-col items-center justify-center gap-[2px]">
            {Array.from({ length: d.dots }, (_, i) => <span key={i} className="h-[6px] w-[6px] rounded-full bg-[#e95420]" />)}
          </span>
        </button>
      ))}
      <button type="button" aria-label="Show applications" className="mt-auto h-16 w-full">
        <Icon>
          {[20, 32, 44].map((y) => [21, 33, 45].map((x) => <circle key={`${x}-${y}`} cx={x} cy={y} r="3" fill="#eee" />))}
        </Icon>
      </button>
    </nav>
  );
}

/* ---------- desktop top bar ---------- */

function TopBar() {
  return (
    <header className="grid h-[27px] shrink-0 grid-cols-[1fr_auto_1fr] items-center bg-linear-to-b from-[#56534b] to-[#3e3d38] font-['Open_Sans',sans-serif] text-[14px] leading-[27px] font-bold text-[#dfdbd2]">
      <div className="flex items-center pl-3 text-[15px]">
        <button type="button">Activities</button>
        <button type="button" className="ml-[18px] flex items-center gap-[5px]">
          <ChromeLogo className="h-4 w-4" />
          Google Chrome
          <svg className="h-[6px] w-[10px]" viewBox="0 0 10 6"><path d="M0 0H10L5 6Z" fill="#dfdbd2" /></svg>
        </button>
      </div>
      <button type="button" className="ml-[68px]">Mon 13:00</button>
      <div className="flex items-center justify-end pr-[15px]">
        <svg className="mr-[5px] h-[18px] w-3" viewBox="0 0 12 18">
          <path d="M3 3a2 2 0 0 1 4 0v8a3.5 3.5 0 1 1-4 0Z" fill="none" stroke="#dfdbd2" strokeWidth="1.6" />
          <path d="M5 5v9M8 3h3M8 6h3M8 9h3" stroke="#dfdbd2" strokeWidth="1.5" />
        </svg>
        <span className="mr-[26px]">2%</span>
        <svg className="mr-[26px] h-[19px] w-[19px]" viewBox="0 0 19 19">
          <path d="M5 1L9.500 4L14 1L18.500 4.500L15.500 8L18.500 11.500L14.500 14L9.500 18L4.500 14L0.500 11.500L3.500 8L0.500 4.500Z" fill="#e4e0d8" />
        </svg>
        <svg className="mr-[29px] h-[20px] w-[20px]" viewBox="0 0 20 20">
          <path d="M8 2v14M12.500 2v10M2 7h15M2 12h12" stroke="#111" strokeWidth="4.500" strokeLinecap="round" />
          <path d="M8 2.500v4M12.500 2v5M2.500 7h5M13 7h4M2 12h6M8 12v4" stroke="#fff" strokeWidth="3" strokeLinecap="round" />
          <circle cx="14" cy="14" r="5" fill="#ff2e74" stroke="#222" />
        </svg>
        <svg className="mr-[11px] h-[15px] w-[16px]" viewBox="0 0 16 15" fill="none" stroke="#dfdbd2" strokeWidth="2">
          <path d="M1 5Q8-1 15 5" strokeOpacity="0.5" /><path d="M3.500 8Q8 4 12.500 8" /><path d="M5.500 11Q8 9 10.500 11" /><circle cx="8" cy="13" r="1" fill="#dfdbd2" />
        </svg>
        <svg className="mr-[13px] h-4 w-[18px]" viewBox="0 0 18 16">
          <path d="M1 5h3l4-4v13l-4-4H1Z" fill="#dfdbd2" />
          <path d="M10 4q2 4 0 7M12 2q4 5 0 10M14 1q3 4 2 8" fill="none" stroke="#8f8c85" strokeWidth="1.3" />
          <path d="M12 10l5 5M17 10l-5 5" stroke="#dfdbd2" strokeWidth="1.8" />
        </svg>
        <svg className="mr-3 h-[17px] w-3" viewBox="0 0 12 17">
          <path d="M4 1h4v2h3v13H1V3h3Z" fill="none" stroke="#dfdbd2" strokeWidth="1.6" />
          <path d="M3 6h6M3 9h6M3 12h6M3 14h6" stroke="#dfdbd2" strokeWidth="1.4" />
        </svg>
        <svg className="h-[6px] w-[10px]" viewBox="0 0 10 6"><path d="M0 0H10L5 6Z" fill="#dfdbd2" /></svg>
      </div>
    </header>
  );
}

/* ---------- browser ---------- */

function Tab({ icon, title, last = false, active = false, fade = false }: {
  icon: ReactNode; title: ReactNode; last?: boolean; active?: boolean; fade?: boolean;
}) {
  return (
    <div className={`relative flex h-full w-[239px] items-center pr-2 pl-3 ${active ? 'rounded-t-lg bg-white' : ''}`}>
      <span className="flex h-4 w-4 shrink-0 items-center justify-center">{icon}</span>
      <button
        type="button"
        className={`flex min-w-0 flex-1 items-center text-left whitespace-nowrap ${last ? 'ml-px' : 'ml-[7px]'} ${fade ? '[mask-image:linear-gradient(to_right,black_85%,transparent)]' : ''}`}
      >
        {title}
      </button>
      <button type="button" aria-label="Close tab" className="ml-1 flex h-4 w-4 items-center justify-center"><MdClose className="h-[14px] w-[14px] text-[#5f6368]" /></button>
      {!last && !active && <span className="absolute top-2 right-0 h-5 w-px bg-[#85878c]" />}
    </div>
  );
}

function Browser() {
  return (
    <>
      <div className="flex h-[34px] shrink-0 bg-linear-to-b from-[#dddee4] from-50% to-white to-50% font-['Noto_Sans',sans-serif] text-[14px] text-[#45474c]">
        <div className="flex rounded-br-lg bg-[#dddee4] pl-[9px]">
          <Tab fade icon={<FaGithub className="h-4 w-4 text-[#1b1f23]" />} title="uwdata/draco-vis: Draco c" />
          <Tab
            title="Draco Editor"
            icon={(
              <svg className="h-4 w-4" viewBox="0 0 16 16">
                <path d="M1 10L5 2L4 10L9 12L15 15M5 2L6 10M2 12L5 10" fill="none" stroke="#3a3450" strokeWidth="1.2" strokeDasharray="2 1" />
                <circle cx="2" cy="11" r="1.2" fill="#3a3450" /><circle cx="5" cy="2" r="1" fill="#3a3450" /><circle cx="9" cy="12" r="1" fill="#3a3450" />
              </svg>
            )}
          />
          <Tab
            title="PaperCut MF : Web Print"
            icon={<svg className="h-4 w-4" viewBox="0 0 16 16"><path d="M3 1L13 0L14 8L9 12L7 11L4 16L2 8Z" fill="#1fc24a" /><path d="M6 4L11 4L10 8L7 9Z" fill="#e6ffd0" /><path d="M11 1L14 0L14 8L11 9Z" fill="#7ee02b" /></svg>}
          />
          <Tab fade icon={<MdPublic className="h-[18px] w-[18px] text-[#5f6368]" />} title="https://austrafficwatch.cc" />
          <Tab
            last fade
            icon={<FcGoogle className="h-4 w-4 rounded-full bg-white" />}
            title={<><span className="mr-[2px] h-[23px] w-[97px] shrink-0 bg-black" />- Google Sea</>}
          />
        </div>
        <Tab
          active title="Vega Editor"
          icon={<svg className="h-4 w-4" viewBox="0 0 16 16"><circle cx="8" cy="8" r="8" fill="#2b0a70" /><circle cx="8" cy="8" r="3.500" fill="#2a4fae" /><path d="M8 4L9 7L12 8L9 9L8 12L7 9L4 8L7 7Z" fill="#9fe0f4" /></svg>}
        />
        <div className="flex flex-1 items-center rounded-bl-lg bg-[#dddee4] pr-[10px] pl-3">
          <button type="button" aria-label="New tab"><MdAdd className="h-5 w-5 text-[#3c4043]" /></button>
          <div className="ml-auto flex items-center gap-4 text-[#45474c]">
            <button type="button" aria-label="Minimize" className="flex h-4 w-4 items-center justify-center"><span className="mt-2 h-[2px] w-[10px] bg-current" /></button>
            <button type="button" aria-label="Restore" className="h-4 w-4">
              <svg className="h-4 w-4" viewBox="0 0 16 16" fill="none" stroke="currentColor" strokeWidth="2"><path d="M6.500 4.500h6v5h-6zM3 6v7h7" /></svg>
            </button>
            <button type="button" aria-label="Close window"><MdClose className="h-4 w-4" /></button>
          </div>
        </div>
      </div>
      <div className="flex h-[38px] shrink-0 items-center border-b border-[#b6bcbc] bg-white pr-[11px] pb-px pl-3 text-[#5f6368]">
        <button type="button" aria-label="Back"><MdArrowBack className="h-[19px] w-[19px]" /></button>
        <button type="button" aria-label="Forward" className="ml-[13px] text-[#bcbec0]"><MdArrowForward className="h-[19px] w-[19px]" /></button>
        <button type="button" aria-label="Reload" className="ml-[13px]"><MdRefresh className="h-5 w-5" /></button>
        <div className="ml-3 flex h-7 flex-1 items-center rounded-full bg-[#eff3f4] pr-[10px] pl-[11px]">
          <MdLock className="h-[14px] w-[14px]" />
          <input
            aria-label="Address" readOnly value="https://vega.github.io/editor/#/custom/vega-lite"
            className="ml-[9px] flex-1 bg-[linear-gradient(to_right,#5f6368_47px,#111_47px,#111_140px,#80868b_140px)] bg-clip-text font-['Open_Sans',sans-serif] text-[14px] text-transparent outline-none"
          />
          <button type="button" aria-label="Bookmark"><MdStarBorder className="h-[18px] w-[18px]" /></button>
        </div>
        <button type="button" aria-label="Profile" className="ml-3 h-5 w-5 overflow-hidden rounded-full">
          <svg className="h-5 w-5" viewBox="0 0 20 20">
            <rect width="20" height="20" fill="#d9d2cf" /><path d="M2 20Q3 14 10 14Q17 14 18 20Z" fill="#44525f" />
            <ellipse cx="10" cy="9" rx="4" ry="5.500" fill="#d59a80" /><path d="M5.500 8Q5 1 10 1Q15 1 14.500 8L13 5H7Z" fill="#3a2620" /><path d="M8 11.500Q10 13.500 12 11.500Z" fill="#fff" />
          </svg>
        </button>
        <button type="button" aria-label="Menu" className="ml-3"><MdMoreVert className="h-5 w-5" /></button>
      </div>
    </>
  );
}

/* ---------- Vega editor behind the dialog ---------- */

function HeaderButton({ icon, label, children }: { icon: ReactNode; label?: string; children?: ReactNode }) {
  return (
    <button type="button" aria-label={label} className={`flex items-center gap-[5px] ${label ? 'px-5' : 'px-[25px]'}`}>
      {icon}
      {children}
    </button>
  );
}

function IdlLogo() {
  const dots: [number, number, string][] = [
    [0, 0, '#888'], [0, 2, '#888'], [0, 3, '#888'], [0, 4, '#888'], [0, 5, '#888'],
    [2, 0, ''], [4, 0, '#7b1fa2'], [4, 1, '#7b1fa2'], [4, 2, '#7b1fa2'], [4, 3, '#7b1fa2'], [4, 4, '#7b1fa2'], [4, 5, '#7b1fa2'],
    [3, 3, '#7b1fa2'], [3, 5, '#7b1fa2'], [2, 3, '#7b1fa2'], [2, 4, '#7b1fa2'], [2, 5, '#7b1fa2'],
    [6, 0, '#c79a10'], [6, 1, '#c79a10'], [6, 2, '#c79a10'], [6, 3, '#c79a10'], [6, 4, '#c79a10'], [6, 5, '#c79a10'], [7, 5, '#c79a10'],
  ];
  return (
    <svg className="h-[31px] w-[35px]" viewBox="0 0 35 31" aria-label="Interactive Data Lab">
      {dots.filter((d) => d[2]).map(([x, y, c]) => <rect key={`${x}-${y}`} x={x * 4.4} y={2 + y * 4.8} width="4" height="4" fill={c} />)}
    </svg>
  );
}

function Editor() {
  const ic = 'h-6 w-6';
  return (
    <div className="flex h-full flex-col text-sm text-black">
      <div className="flex h-[60px] shrink-0 items-center border-b-2 border-[#d5d5d5] bg-[#fafafa]">
        <label className="mr-[5px] ml-[15px] flex h-[38px] w-[125px] items-center rounded border border-[#ccc]">
          <select aria-label="Mode" className="flex-1 appearance-none pl-[10px] text-base text-[#333] outline-none" defaultValue="Vega-Lite">
            <option>Vega-Lite</option>
            <option>Vega</option>
          </select>
          <span className="h-5 w-px bg-[#ccc]" />
          <FiChevronDown className="mx-[9px] h-[18px] w-[18px] text-[#aaa]" />
        </label>
        <HeaderButton icon={<FiTrash2 className={ic} />}>Clear</HeaderButton>
        <HeaderButton icon={<FiCode className={ic} />}>Format</HeaderButton>
        <HeaderButton icon={<FiPlay className={`${ic} text-[#808080]`} />}>
          <span className="relative text-[#808080]">Run<span className="absolute top-5 left-0 text-xs">Auto</span></span>
          <FiChevronDown className="-mr-[6px] ml-[5px] h-[18px] w-[18px] text-[#999]" />
        </HeaderButton>
        <HeaderButton icon={<FiExternalLink className={ic} />}>Export</HeaderButton>
        <HeaderButton icon={<FiShare2 className={ic} />}>Share</HeaderButton>
        <HeaderButton label="Help" icon={<FiHelpCircle className={ic} />} />
        <div className="ml-auto flex items-center pr-[23px]">
          <HeaderButton icon={<FiGrid className={ic} />}>Examples</HeaderButton>
          <HeaderButton icon={<FiGithub className={ic} />}>Gist</HeaderButton>
          <HeaderButton icon={<FiFileText className={ic} />}>Vega-Lite Docs</HeaderButton>
          <span className="ml-[13px]"><IdlLogo /></span>
        </div>
      </div>
      <div className="flex min-h-0 flex-1">
        <div className="flex w-[40%] flex-col border-r border-[#ccc]">
          <div className="flex min-h-0 flex-1 font-['DejaVu_Sans_Mono',monospace] text-sm leading-[19px]">
            <div className="w-[60px] pr-[26px] text-right text-[#237893]"><div className="text-[#0b216f]">1</div><div>2</div><div>3</div></div>
            <div className="flex-1 border-r border-[#ddd]">
              <div className="border-y border-[#eee] leading-[17px]"><span className="bg-[#ddd]">{'{'}</span></div>
              <div className="border-l border-[#d3d3d3] pl-4 whitespace-pre"><span className="text-[#a31515]">"$schema"</span>: <span className="text-[#0451a5]">"<a href="#schema" className="underline">https://vega.github.io/schema/vega-lite/v3.json</a>"</span></div>
              <div><span className="bg-[#ddd]">{'}'}</span></div>
            </div>
            <div className="w-[14px]" />
          </div>
          <button type="button" className="flex h-[31px] items-center border-t border-[#d0d0d0] bg-[#efefef] pr-9 pl-[10px] text-xs">
            <span className="flex-1 text-left">Compiled Vega</span>
            <FiChevronUp className="h-5 w-5" />
            <span className="flex-1" />
          </button>
        </div>
        <div className="flex flex-1 flex-col">
          <div className="flex flex-1 items-end justify-end gap-5 pr-[10px] pb-[5px] text-xs text-white">
            <button type="button" className="h-[22px] rounded bg-[#e00000] px-[5px]">Error</button>
            <span className="rounded bg-[#009432] px-[5px] leading-[22px]">Vega-Lite version 3.2.1</span>
            <button type="button" className="h-[22px] rounded bg-[#808080] px-[5px]">Renderer: Canvas</button>
          </div>
          <div className="flex h-[31px] items-center border-t border-[#d0d0d0] bg-[#efefef] text-xs">
            <button type="button" className="flex h-full w-[68px] items-center justify-center bg-[#fafafa]">LOGS (8)</button>
            <button type="button" aria-label="Expand logs" className="flex flex-1 justify-center pr-[68px] text-[#555]"><FiChevronUp className="h-5 w-5" /></button>
          </div>
        </div>
      </div>
    </div>
  );
}

function ExamplesDialog() {
  return (
    <div className="absolute inset-0 flex items-center justify-center bg-black/80">
      <div role="dialog" aria-label="Examples" className="relative flex h-[calc(90%_+_2px)] w-4/5 flex-col bg-white pt-[50px] pb-[50px] text-black">
        <div className="absolute inset-x-0 -top-4 flex justify-center font-['Liberation_Sans',sans-serif] text-base">
          <button type="button" className="h-[30px] w-[120px] rounded-l-[15px] border border-r-0 border-black bg-white">Vega</button>
          <button type="button" className="h-[30px] w-[120px] rounded-r-[15px] border border-black bg-[#6a1486] text-white">Vega-Lite</button>
        </div>
        <button type="button" aria-label="Close" className="absolute top-[10px] right-[10px]"><FiX className="h-6 w-6" /></button>
        <div className="flex min-h-0 flex-1">
          <Gallery />
          <div className="mr-px flex w-[7px] flex-col bg-[#f5f5f5]">
            <div className="mt-[123px] h-[162px] rounded-sm bg-[#cdcdcd]" />
          </div>
        </div>
      </div>
    </div>
  );
}

export default function App() {
  return (
    <div className="flex h-screen flex-col overflow-hidden font-['Roboto',sans-serif]">
      <TopBar />
      <div className="flex min-h-0 flex-1">
        <Dock />
        <main className="flex min-w-0 flex-1 flex-col bg-white">
          <Browser />
          <div className="relative min-h-0 flex-1">
            <Editor />
            <ExamplesDialog />
          </div>
        </main>
      </div>
    </div>
  );
}
